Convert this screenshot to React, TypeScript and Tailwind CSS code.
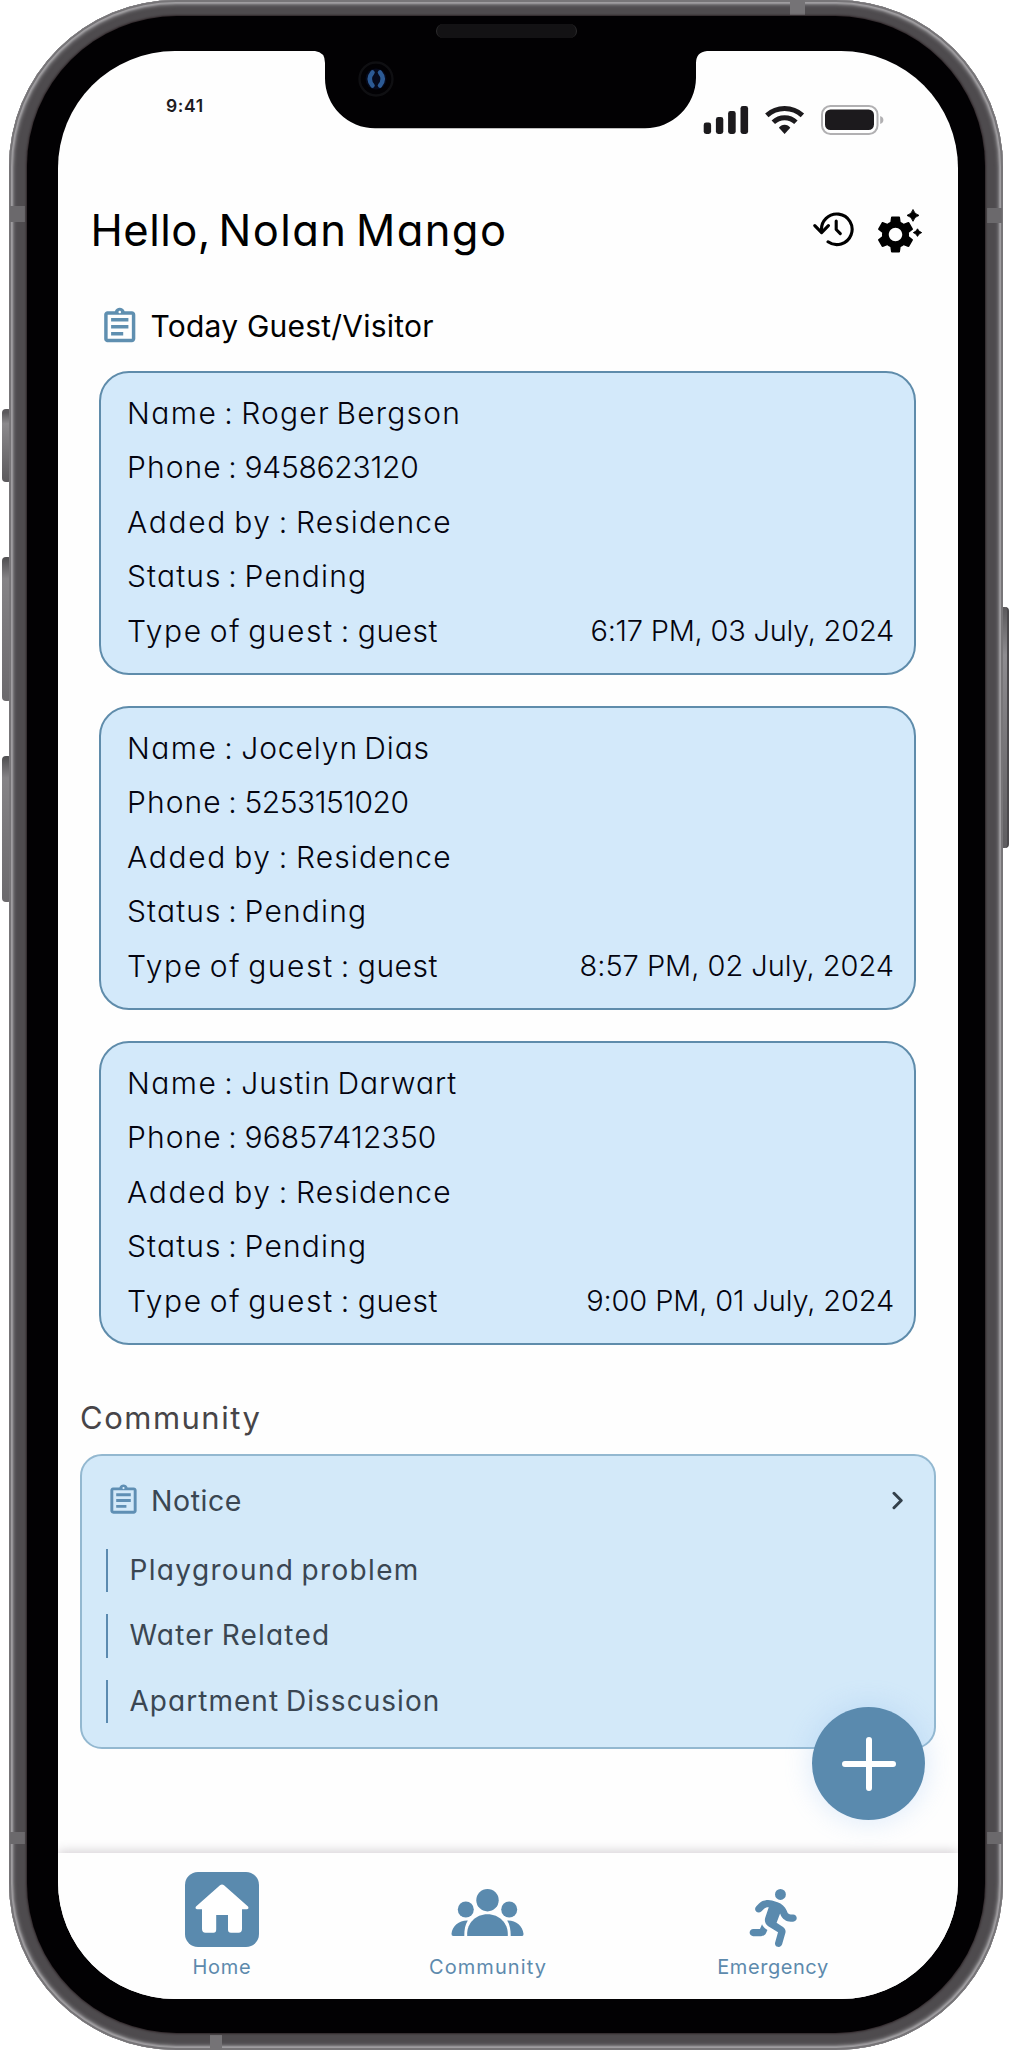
import type { ReactNode } from "react";
import { MdOutlineAssignment, MdSettings } from "react-icons/md";
import { FaPersonRunning } from "react-icons/fa6";

type Span = { text: string; tracking: string };
type Row = { label: Span; value: Span };
type Visit = { rows: Row[]; date: Span };

const nameLabel: Span = { text: "Name : ", tracking: "tracking-[1.5px]" };
const phoneLabel: Span = { text: "Phone : ", tracking: "tracking-[1.1px]" };

const residence: Row = {
  label: { text: "Added by : ", tracking: "tracking-[1.68px]" },
  value: { text: "Residence", tracking: "tracking-[1.1px]" },
};
const pending: Row = {
  label: { text: "Status : ", tracking: "tracking-[1.15px]" },
  value: { text: "Pending", tracking: "tracking-[1.19px]" },
};

const visits: Visit[] = [
  {
    rows: [
      { label: nameLabel, value: { text: "Roger Bergson", tracking: "tracking-[1.2px]" } },
      { label: phoneLabel, value: { text: "9458623120", tracking: "tracking-[-0.25px]" } },
      residence,
      pending,
    ],
    date: { text: "6:17 PM, 03 July, 2024", tracking: "tracking-[-0.23px]" },
  },
  {
    rows: [
      { label: nameLabel, value: { text: "Jocelyn Dias", tracking: "tracking-[0.9px]" } },
      { label: phoneLabel, value: { text: "5253151020", tracking: "tracking-[-0.5px]" } },
      residence,
      pending,
    ],
    date: { text: "8:57 PM, 02 July, 2024", tracking: "tracking-[-0.02px]" },
  },
  {
    rows: [
      { label: nameLabel, value: { text: "Justin Darwart", tracking: "tracking-[1px]" } },
      { label: phoneLabel, value: { text: "96857412350", tracking: "tracking-[0.15px]" } },
      residence,
      pending,
    ],
    date: { text: "9:00 PM, 01 July, 2024", tracking: "tracking-[-0.13px]" },
  },
];

const notices: Span[] = [
  { text: "Playground problem", tracking: "tracking-[1.35px]" },
  { text: "Water Related", tracking: "tracking-[1.2px]" },
  { text: "Apartment Disscusion", tracking: "tracking-[1.03px]" },
];

function StatusIcons() {
  return (
    <svg width="184" height="34" viewBox="0 0 184 34" fill="#1c1a1d">
      <rect x="1.7" y="19.5" width="7.4" height="11.5" rx="2.4" />
      <rect x="13.9" y="14" width="7.4" height="17" rx="2.4" />
      <rect x="26.1" y="8" width="7.6" height="23" rx="2.4" />
      <rect x="38.5" y="3" width="7.6" height="28" rx="2.4" />
      <g fill="none" stroke="#1c1a1d" strokeWidth="5">
        <path d="M64.8 12.3 A26.5 26.5 0 0 1 100.4 12.3" />
        <path d="M71.3 19.2 A16.5 16.5 0 0 1 93.9 19.2" />
      </g>
      <path d="M82.6 31 L76.9 24.8 Q79 21.8 82.6 21.8 Q86.2 21.8 88.3 24.8 Z" />
      <rect x="120" y="3" width="55.5" height="28" rx="8.5" fill="none" stroke="#b1b0b2" strokeWidth="2" />
      <rect x="123" y="6.5" width="49" height="20.5" rx="5.5" />
      <path d="M178.2 13 Q181.4 14.2 181.4 17 Q181.4 19.8 178.2 21 Z" fill="#b1b0b2" />
    </svg>
  );
}

function HistoryIcon() {
  return (
    <svg width="42" height="36" viewBox="0 0 42 36" fill="none" stroke="#000" strokeWidth="3.1" strokeLinecap="round" strokeLinejoin="round" className="mb-[3px]">
      <path d="M8.6 20 A15.3 15.3 0 1 1 15 30.8" />
      <path d="M1.8 14.6 L8.6 21.6 L15.4 14.6" />
      <path d="M23.2 10 V18.5 L27.3 22.6" />
    </svg>
  );
}

function Sparkles() {
  return (
    <svg width="18" height="30" viewBox="0 0 18 30" className="absolute right-0 top-0">
      <g stroke="#000" strokeWidth="0.9">
        <path d="M8 0.5 Q9.4 5.2 14 6.4 Q9.4 7.6 8 12.3 Q6.6 7.6 2 6.4 Q6.6 5.2 8 0.5Z" />
        <path d="M12.5 19.8 Q13.5 22.6 16.7 23.6 Q13.5 24.6 12.5 27.4 Q11.5 24.6 8.3 23.6 Q11.5 22.6 12.5 19.8Z" />
      </g>
    </svg>
  );
}

function Notch() {
  return (
    <svg width="392" height="78" viewBox="0 0 392 78" className="absolute left-[257px] top-0">
      <path d="M0 0 Q10 1 10 12 V27 A50 50 0 0 0 60 77.3 H330 A51 51 0 0 0 381 27 V12 Q381 1 392 0 Z" fill="#020103" />
      <circle cx="61" cy="28" r="16.5" fill="#020104" stroke="#0f0f12" strokeWidth="2.4" />
      <circle cx="61" cy="28" r="10.5" fill="#060a1c" />
      <g fill="none" stroke="#2c5a94" strokeWidth="4.5" strokeLinecap="round">
        <path d="M57.5 21.5 Q52 28 57.5 34.5" />
        <path d="M65 21.5 Q70.5 28 65 34.5" />
      </g>
    </svg>
  );
}

function HomeIcon() {
  return (
    <svg width="54" height="50" viewBox="0 0 54 50" fill="#fff">
      <path d="M25 1.3 Q27 -.3 29 1.3 L53 22.6 Q54.3 25 52 25.2 H47 V45 Q47 48.7 43.5 48.7 H36 Q33 48.7 33 45.5 V31 H21.2 V45.5 Q21.2 48.7 18.5 48.7 H10.5 Q7 48.7 7 45 V25.2 H2 Q-.3 25 1 22.6 Z" />
    </svg>
  );
}

function PeopleIcon() {
  return (
    <svg width="73" height="48" viewBox="0 0 73 48" fill="#5a8aae">
      <circle cx="36.5" cy="11.2" r="11.2" />
      <circle cx="14.8" cy="20.5" r="8" />
      <circle cx="58.2" cy="20.5" r="8" />
      <path d="M16.2 47 V44.5 C16.2 34.5 24.5 25.2 36.5 25.2 C48.5 25.2 56.8 34.5 56.8 44.5 V47 Z" />
      <path d="M2.4 47 Q.3 47 .5 44.8 C1.3 37 8 31.2 16.8 31.5 C14.3 35.5 13.2 40.5 13.3 47 Z" />
      <path d="M70.6 47 Q72.7 47 72.5 44.8 C71.7 37 65 31.2 56.2 31.5 C58.7 35.5 59.8 40.5 59.7 47 Z" />
    </svg>
  );
}

function VisitCard({ visit }: { visit: Visit }) {
  return (
    <article className="h-[304px] rounded-[30px] border-2 border-[#5f8cab] bg-[#d3e9fa] pl-[26px] pr-[20px] pt-[13.5px] text-[30px] font-light leading-[54.4px] text-[#04040f]">
      {visit.rows.map(({ label, value }) => (
        <p key={label.text} className="whitespace-pre [word-spacing:-3px]">
          <span className={label.tracking}>{label.text}</span>
          <span className={value.tracking}>{value.text}</span>
        </p>
      ))}
      <div className="flex justify-between">
        <p className="whitespace-pre [word-spacing:-3px]">
          <span className="tracking-[1.6px]">Type of guest : </span>
          <span className="tracking-[0.5px]">guest</span>
        </p>
        <span className={`text-[29px] ${visit.date.tracking}`}>{visit.date.text}</span>
      </div>
    </article>
  );
}

function NavItem({ label, tracking, children }: { label: string; tracking: string; children: ReactNode }) {
  return (
    <div className="flex w-[120px] flex-col items-center">
      <div className="flex h-[75px] items-start justify-center">{children}</div>
      <span className={`mt-[7.5px] whitespace-nowrap text-[20px] leading-6 text-[#5d8aad] ${tracking}`}>{label}</span>
    </div>
  );
}

export default function App() {
  return (
    <main className="relative h-[2050px] w-[1012px] overflow-hidden bg-white pl-[9px] font-['Inter',sans-serif] [font-feature-settings:'cv11','calt'_0]">
      <i className="absolute left-[2px] top-[409px] h-[73px] w-[10px] rounded-[4px] bg-linear-to-b from-[#5b595c] from-5% via-[#8b898c] via-20% to-[#5b595c]" />
      <i className="absolute left-[2px] top-[557px] h-[144px] w-[10px] rounded-[4px] bg-linear-to-b from-[#4f4e50] from-0% via-[#858386] via-15% to-[#6b696c]" />
      <i className="absolute left-[2px] top-[756px] h-[146px] w-[10px] rounded-[4px] bg-linear-to-b from-[#4f4e50] from-0% via-[#858386] via-15% to-[#6b696c]" />
      <i className="absolute left-[999px] top-[607px] h-[241px] w-[10px] rounded-[4px] border-r-2 border-[#4b494c] bg-linear-to-b from-[#5b595c] from-0% via-[#8e8c90] via-20% to-[#5f5d60]" />

      <div className="relative h-[2050px] w-[994px] rounded-[167px] bg-[#4e4b4e] px-[18px] pb-[17px] pt-4 shadow-[inset_0_0_0_2px_#777578,inset_0_0_2px_4px_#a3a1a4,inset_0_0_3px_6px_#6a686b]">
        <i className="absolute left-[1px] top-[206px] h-4 w-[15px] bg-[#6b696c]" />
        <i className="absolute right-[1px] top-[208px] h-[15px] w-[15px] bg-[#6b696c]" />
        <i className="absolute left-[1px] top-[1832px] h-3 w-[15px] bg-[#6b696c]" />
        <i className="absolute right-[1px] top-[1832px] h-3 w-[15px] bg-[#6b696c]" />
        <i className="absolute left-[781px] top-0 h-[15px] w-[15px] bg-[#757376]" />
        <i className="absolute bottom-0 left-[201px] h-[15px] w-3 bg-[#757376]" />

        <div className="relative h-full rounded-[150px] bg-[#020103] pl-[31px] pr-[27px] pt-[35px] shadow-[0_0_2px_1px_#2f2629]">
          <i className="absolute left-[409px] top-[8px] h-[14px] w-[141px] rounded-[7px] border-x border-[#2c2b2d] bg-[#131214]" />

          <div className="relative flex h-[1947.5px] w-[900px] flex-col overflow-hidden rounded-[117px] bg-[#fefefe]">
            <Notch />

            <header className="flex h-[149px] justify-between pl-[108px] pr-[72px]">
              <span className="mt-[45px] text-[17.5px] font-semibold leading-5 tracking-[0.6px] text-[#1e1c1f]">9:41</span>
              <div className="mt-[52px]">
                <StatusIcons />
              </div>
            </header>

            <div className="flex h-[60px] items-center justify-between pl-[32.5px] pr-[35px]">
              <h1 className="whitespace-pre text-[43.5px] leading-[60px] text-black [word-spacing:-5px]">
                <span className="tracking-[0.5px]">Hello, </span>
                <span className="tracking-[1.4px]">Nolan Mango</span>
              </h1>
              <div className="flex items-center gap-[22px]">
                <HistoryIcon />
                <div className="relative flex h-[43px] w-[46px] items-end">
                  <MdSettings className="-mb-[5px] -ml-1 size-[45px] shrink-0" />
                  <Sparkles />
                </div>
              </div>
            </div>

            <section className="mt-[40px] pl-[41px]">
              <div className="flex h-[53px] items-center">
                <MdOutlineAssignment className="size-[41.5px] text-[#5f8fb0]" />
                <h2 className="ml-[10px] text-[30px] tracking-[0.22px] text-black [font-feature-settings:normal]">Today Guest/Visitor</h2>
              </div>
              <div className="mt-[17.5px] flex w-[817px] flex-col gap-[31px]">
                {visits.map((v) => (
                  <VisitCard key={v.date.text} visit={v} />
                ))}
              </div>
            </section>

            <section className="mt-[48px] pl-[22px]">
              <h2 className="text-[31px] leading-[50px] tracking-[1.5px] text-[#474548]">Community</h2>
              <div className="mt-[11px] h-[295.5px] w-[856px] rounded-[22px] border-2 border-[#93b8d0] bg-[#d3e9f9] pl-[24px] pt-[20px] text-[#3a4652]">
                <div className="flex h-[49px] items-center pr-[30px]">
                  <MdOutlineAssignment className="size-[35px] text-[#5f8fb4]" />
                  <h3 className="ml-[10px] flex-1 text-[28.5px] leading-[49px] tracking-[0.55px]">Notice</h3>
                  <svg width="12" height="19" viewBox="0 0 12 19" fill="none" stroke="#33404b" strokeWidth="3" strokeLinecap="round" strokeLinejoin="round">
                    <path d="M2 2.3 L9.2 9.5 L2 16.7" />
                  </svg>
                </div>
                <ul className="mt-[24px] flex flex-col gap-[22px]">
                  {notices.map((n) => (
                    <li key={n.text} className={`h-[43.5px] border-l-2 border-[#5b8ab0] pl-[21.5px] text-[28px] leading-[43.5px] [word-spacing:-2px] ${n.tracking}`}>
                      {n.text}
                    </li>
                  ))}
                </ul>
              </div>
            </section>

            <nav className="mt-auto flex h-[146px] shrink-0 bg-[#fefefe] pl-[104px] pt-[19.5px] shadow-[0_-2px_10px_rgba(70,50,70,0.22)]">
              <NavItem label="Home" tracking="tracking-[0.77px]">
                <span className="flex size-[74.5px] justify-center rounded-[13px] bg-[#5a8aae] pt-[12px]">
                  <HomeIcon />
                </span>
              </NavItem>
              <div className="ml-[146px] flex">
                <NavItem label="Community" tracking="tracking-[1.09px]">
                  <span className="pr-[2px] pt-[17px]">
                    <PeopleIcon />
                  </span>
                </NavItem>
              </div>
              <div className="ml-[165px] flex">
                <NavItem label="Emergency" tracking="tracking-[0.57px]">
                  <FaPersonRunning className="ml-[3px] mt-[17px] size-[58px] text-[#5a8aae]" />
                </NavItem>
              </div>
            </nav>

            <button className="absolute left-[754px] top-[1656px] flex size-[113px] items-center justify-center rounded-full bg-[#5a8aae] shadow-[0_0_24px_4px_rgba(140,185,240,0.24)]">
              <svg width="54" height="54" viewBox="0 0 54 54" stroke="#fff" strokeWidth="6" strokeLinecap="round">
                <path d="M27 3 V51 M3 27 H51" />
              </svg>
            </button>
          </div>
        </div>
      </div>
    </main>
  );
}
